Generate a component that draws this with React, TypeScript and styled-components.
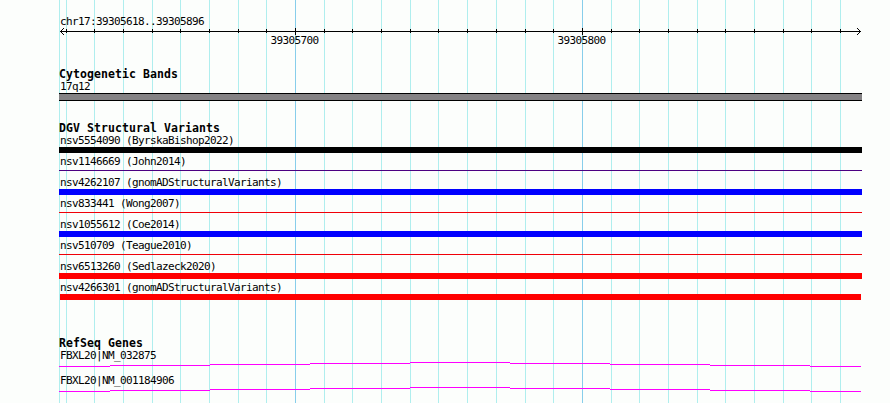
import React from "react"
import styled, { createGlobalStyle } from "styled-components"

const GlobalStyle = createGlobalStyle`
  body {
    margin: 0;
    background: #fcfefc;
  }
`

const WIDTH = 890
const HEIGHT = 403
const LEFT = 59

const minorTicks = [
  66, 94, 123, 152, 180, 209, 238, 266, 324, 352, 381, 410, 438, 467, 496, 525,
  553, 611, 639, 668, 697, 725, 754, 783, 811, 840,
]

const majorTicks = [
  { x: 295, label: "39305700" },
  { x: 582, label: "39305800" },
]

type Variant = {
  name: string
  color: string
  thin?: boolean
  inset?: boolean
}

const variants: Variant[] = [
  { name: "nsv5554090 (ByrskaBishop2022)", color: "#000" },
  { name: "nsv1146669 (John2014)", color: "#4b0082", thin: true },
  { name: "nsv4262107 (gnomADStructuralVariants)", color: "#00f" },
  { name: "nsv833441 (Wong2007)", color: "#f00008", thin: true },
  { name: "nsv1055612 (Coe2014)", color: "#00f" },
  { name: "nsv510709 (Teague2010)", color: "#f00008", thin: true },
  { name: "nsv6513260 (Sedlazeck2020)", color: "#f00" },
  { name: "nsv4266301 (gnomADStructuralVariants)", color: "#f00", inset: true },
]

const genes = ["FBXL20|NM_032875", "FBXL20|NM_001184906"]

// start, end and height of every step of the intron line
const steps = [
  [59, 110, 4],
  [110, 210, 3],
  [210, 310, 2],
  [310, 410, 1],
  [410, 510, 0],
  [510, 610, 1],
  [610, 710, 2],
  [710, 810, 3],
  [810, 861, 4],
]

const Panel = styled.div`
  position: relative;
  width: ${WIDTH}px;
  height: ${HEIGHT}px;
  overflow: hidden;
  color: #000;
  font-family: "DejaVu Sans Mono", "Liberation Mono", monospace;
`

const Grid = styled.svg`
  position: absolute;
  top: 0;
  left: 0;
`

const Tracks = styled.div`
  position: relative;
  display: flex;
  flex-direction: column;
  box-sizing: border-box;
  width: 862px;
  padding: 15px 0 0 ${LEFT}px;
`

const Label = styled.div`
  height: 12px;
  padding-left: 1px;
  font-size: 11px;
  line-height: 14px;
  letter-spacing: -0.622px;
  white-space: pre;
`

const Title = styled.h2`
  height: 12px;
  margin: 0;
  font-size: 11.5px;
  font-weight: bold;
  line-height: 12px;
  letter-spacing: 0.077px;
  white-space: pre;
`

const Ruler = styled.svg`
  display: block;
  height: 7px;
  margin-top: 1px;
`

const TickLabels = styled.div`
  display: flex;
  gap: 238px;
  padding: 0 0 0 210.5px;
  margin-top: -1px;
`

const Track = styled.section<{ $gap: number }>`
  margin-top: ${({ $gap }) => $gap}px;
`

const Band = styled.div`
  box-sizing: border-box;
  height: 8px;
  margin-top: 1px;
  border: solid #000;
  border-width: 1px 0;
  background: #848284;
`

const Row = styled.div`
  height: 21px;
`

const Bar = styled.div<{ $color: string; $thin?: boolean; $inset?: boolean }>`
  height: ${({ $thin }) => ($thin ? 1 : 6)}px;
  margin-top: ${({ $thin }) => ($thin ? 3 : 1)}px;
  margin-left: ${({ $inset }) => ($inset ? 1 : 0)}px;
  margin-right: ${({ $inset }) => ($inset ? 1 : 0)}px;
  background: ${({ $color }) => $color};
`

const Gene = styled.div`
  height: 25px;
`

const Intron = styled.svg`
  display: block;
  margin-top: 1px;
`

const App = () => (
  <>
    <GlobalStyle />
    <Panel>
      <Grid width={WIDTH} height={HEIGHT} shapeRendering="crispEdges">
        {[LEFT, ...minorTicks].map(x => (
          <rect key={x} x={x} y={0} width={1} height={HEIGHT} fill="#afeeee" />
        ))}
        {majorTicks.map(({ x }) => (
          <rect key={x} x={x} y={0} width={1} height={HEIGHT} fill="#87ceeb" />
        ))}
      </Grid>

      <Tracks>
        <Label>chr17:39305618..39305896</Label>
        <Ruler
          width={803}
          height={7}
          viewBox="59 28 803 7"
          shapeRendering="crispEdges"
        >
          <rect x={60} y={31} width={801} height={1} />
          {[1, 2, 3].map(d => (
            <React.Fragment key={d}>
              <rect x={60 + d} y={31 - d} width={1} height={1} />
              <rect x={60 + d} y={31 + d} width={1} height={1} />
              <rect x={860 - d} y={31 - d} width={1} height={1} />
              <rect x={860 - d} y={31 + d} width={1} height={1} />
            </React.Fragment>
          ))}
          {minorTicks.map(x => (
            <rect key={x} x={x} y={29} width={1} height={4} />
          ))}
          {majorTicks.map(({ x }) => (
            <rect key={x} x={x} y={28} width={1} height={7} />
          ))}
        </Ruler>
        <TickLabels>
          {majorTicks.map(({ label }) => (
            <Label key={label}>{label}</Label>
          ))}
        </TickLabels>

        <Track $gap={22}>
          <Title>Cytogenetic Bands</Title>
          <Label>17q12</Label>
          <Band />
        </Track>

        <Track $gap={21}>
          <Title>DGV Structural Variants</Title>
          {variants.map(({ name, color, thin, inset }) => (
            <Row key={name}>
              <Label>{name}</Label>
              <Bar $color={color} $thin={thin} $inset={inset} />
            </Row>
          ))}
        </Track>

        <Track $gap={35}>
          <Title>RefSeq Genes</Title>
          {genes.map(name => (
            <Gene key={name}>
              <Label>{name}</Label>
              <Intron
                width={803}
                height={5}
                viewBox="59 0 803 5"
                shapeRendering="crispEdges"
              >
                {steps.map(([from, to, y]) => (
                  <rect
                    key={from}
                    x={from}
                    y={y}
                    width={to - from}
                    height={1}
                    fill="#f0f"
                  />
                ))}
              </Intron>
            </Gene>
          ))}
        </Track>
      </Tracks>
    </Panel>
  </>
)

export default App
